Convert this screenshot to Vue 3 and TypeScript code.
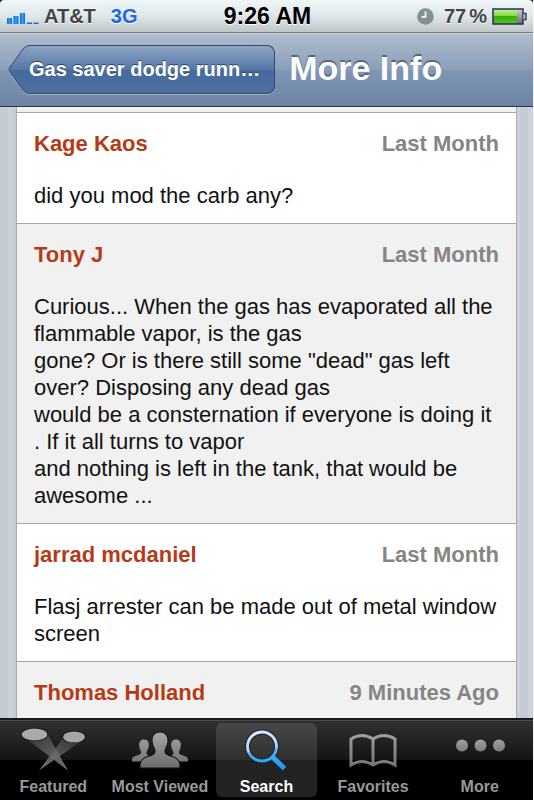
<script setup lang="ts">
import { ref } from 'vue'

interface Comment {
  author: string
  when: string
  text?: string
}

type TabId = 'featured' | 'viewed' | 'search' | 'favorites' | 'more'

const comments: Comment[] = [
  { author: 'Kage Kaos', when: 'Last Month', text: 'did you mod the carb any?' },
  {
    author: 'Tony J',
    when: 'Last Month',
    text: [
      'Curious... When the gas has evaporated all the',
      'flammable vapor, is the gas',
      'gone? Or is there still some "dead" gas left',
      'over? Disposing any dead gas',
      'would be a consternation if everyone is doing it',
      '. If it all turns to vapor',
      'and nothing is left in the tank, that would be',
      'awesome ...',
    ].join('\n'),
  },
  {
    author: 'jarrad mcdaniel',
    when: 'Last Month',
    text: 'Flasj arrester can be made out of metal window\nscreen',
  },
  { author: 'Thomas Holland', when: '9 Minutes Ago' },
]

const tabs: { id: TabId; label: string }[] = [
  { id: 'featured', label: 'Featured' },
  { id: 'viewed', label: 'Most Viewed' },
  { id: 'search', label: 'Search' },
  { id: 'favorites', label: 'Favorites' },
  { id: 'more', label: 'More' },
]

const active = ref<TabId>('search')
</script>

<template>
  <div class="screen">
    <div class="status">
      <div class="status-side">
        <svg class="signal" width="33" height="12" viewBox="0 0 33 12">
          <defs>
            <linearGradient id="bar" x1="0" y1="0" x2="1" y2="0">
              <stop offset="0" stop-color="#1565dc" />
              <stop offset="0.5" stop-color="#27a5fa" />
              <stop offset="1" stop-color="#1565dc" />
            </linearGradient>
          </defs>
          <rect x="0" y="5" width="5" height="6" fill="url(#bar)" />
          <rect x="6.500" y="3" width="5" height="8" fill="url(#bar)" />
          <rect x="13" y="0" width="5" height="11" fill="url(#bar)" />
          <rect x="20" y="9.500" width="5" height="1.500" fill="#2b62cf" />
          <rect x="26.500" y="9.500" width="5" height="1.500" fill="#2b62cf" />
        </svg>
        <span class="carrier">AT&amp;T</span>
        <span class="network">3G</span>
      </div>
      <span class="clock">9:26 AM</span>
      <div class="status-side end">
        <svg class="alarm" width="17" height="17" viewBox="0 0 17 17">
          <circle cx="8.500" cy="8.500" r="8.300" fill="#84908f" />
          <path d="M8.500 3.500V9H4.500" fill="none" stroke="#f2f6f6" stroke-width="1.800" />
        </svg>
        <span class="percent"><span>77</span><span>%</span></span>
        <svg class="battery" width="36" height="17" viewBox="0 0 36 17">
          <defs>
            <linearGradient id="charge" x1="0" y1="0" x2="0" y2="1">
              <stop offset="0" stop-color="#b5ef87" />
              <stop offset="0.450" stop-color="#7fdc42" />
              <stop offset="0.500" stop-color="#39ad0b" />
              <stop offset="1" stop-color="#4fc41b" />
            </linearGradient>
            <linearGradient id="empty" x1="0" y1="0" x2="0" y2="1">
              <stop offset="0" stop-color="#d0d0d2" />
              <stop offset="1" stop-color="#66666c" />
            </linearGradient>
          </defs>
          <rect x="1" y="1" width="30" height="15" fill="url(#empty)" stroke="#333a55" stroke-width="1.600" />
          <rect x="2" y="2" width="23" height="13" fill="url(#charge)" />
          <path d="M31.500 5.500H34V11.500H31.500" fill="#c8ccd2" stroke="#333a55" stroke-width="1.400" />
        </svg>
      </div>
    </div>

    <header class="nav">
      <button class="back" type="button">
        <svg class="back-tip" width="21" height="50" viewBox="0 0 21 50">
          <defs>
            <linearGradient id="tip" gradientUnits="userSpaceOnUse" x1="0" y1="0" x2="0" y2="49">
              <stop offset="0" stop-color="#8ea5c5" />
              <stop offset="0.500" stop-color="#5577a6" />
              <stop offset="0.510" stop-color="#466a9d" />
              <stop offset="1" stop-color="#4a6f9f" />
            </linearGradient>
          </defs>
          <path d="M22 49.500Q18 49.500 15 46L1.500 27Q0 25 1.500 23L15 4Q18 1 22 1" fill="none" stroke="#a3b3c9" />
          <path d="M22 48.500Q18 48.500 15 45L1.500 26Q0 24.500 1.500 23L15 4Q18 .500 22 .500" fill="url(#tip)" stroke="#38486a" />
        </svg>
        <span class="back-label">Gas saver dodge runn…</span>
      </button>
      <h1>More Info</h1>
    </header>

    <main>
      <ul class="comments">
        <li v-for="comment in comments" :key="comment.author" class="comment">
          <div class="meta">
            <a class="author" href="#">{{ comment.author }}</a>
            <span class="when">{{ comment.when }}</span>
          </div>
          <p v-if="comment.text" class="text">{{ comment.text }}</p>
        </li>
      </ul>
    </main>

    <nav class="tabs">
      <button
        v-for="tab in tabs"
        :key="tab.id"
        type="button"
        class="tab"
        :class="{ active: active === tab.id }"
        @click="active = tab.id"
      >
        <svg v-if="tab.id === 'featured'" width="66" height="48" viewBox="0 0 66 48">
          <defs>
            <linearGradient id="beamA" x1="0" y1="0" x2="1" y2="1">
              <stop offset="0" stop-color="#333" />
              <stop offset="1" stop-color="#8a8a8a" />
            </linearGradient>
            <linearGradient id="beamB" x1="1" y1="0" x2="0" y2="1">
              <stop offset="0" stop-color="#2c2c2c" />
              <stop offset="1" stop-color="#777" />
            </linearGradient>
          </defs>
          <path d="M43 13L63 15L19 45.500Z" fill="url(#beamB)" />
          <path d="M4 12L28 10L48 45.500Z" fill="url(#beamA)" opacity="0.850" />
          <ellipse cx="14.500" cy="9.500" rx="13.500" ry="6.700" fill="#111" />
          <ellipse cx="14.500" cy="9.500" rx="12.700" ry="6" fill="#aaa" />
          <ellipse cx="54" cy="12" rx="11.800" ry="6.200" fill="#111" />
          <ellipse cx="54" cy="12" rx="11" ry="5.500" fill="#a5a5a5" />
        </svg>

        <svg v-else-if="tab.id === 'viewed'" width="60" height="48" viewBox="0 0 60 48">
          <defs>
            <linearGradient id="people" gradientUnits="userSpaceOnUse" x1="0" y1="7" x2="0" y2="43">
              <stop offset="0" stop-color="#a6a6a6" />
              <stop offset="1" stop-color="#6c6c6c" />
            </linearGradient>
          </defs>
          <path
            d="M14 14.500C18 14.500 19.500 18 18.500 22C18 25 16.500 26 16.500 28C16.500 31 21 31 21 33C16 34 13 35 12 36.500H2C2 32 3 32 7 30.500C10 29.500 11 29 11 27.500C11 25.500 9.500 24 9.200 21C8.900 17 10.500 14.500 14 14.500Z"
            fill="url(#people)"
          />
          <path
            d="M46 14.500C42 14.500 40.500 18 41.500 22C42 25 43.500 26 43.500 28C43.500 31 39 31 39 33C44 34 47 35 48 36.500H58C58 32 57 32 53 30.500C50 29.500 49 29 49 27.500C49 25.500 50.500 24 50.800 21C51.100 17 49.500 14.500 46 14.500Z"
            fill="url(#people)"
          />
          <path
            d="M30 7.500C35.500 7.500 38 11.500 37.300 17C37 21 34.500 23 34.500 26C34.500 29.500 37 30.500 42 32C47.500 33.500 49.500 36 49.500 42.500H10.500C10.500 36 12.500 33.500 18 32C23 30.500 25.500 29.500 25.500 26C25.500 23 23 21 22.700 17C22 11.500 24.500 7.500 30 7.500Z"
            fill="url(#people)"
            stroke="#111"
            stroke-width="2"
            paint-order="stroke"
          />
        </svg>

        <svg v-else-if="tab.id === 'search'" width="48" height="48" viewBox="0 0 48 48">
          <defs>
            <linearGradient id="glass" gradientUnits="userSpaceOnUse" x1="18" y1="6" x2="24" y2="44">
              <stop offset="0" stop-color="#dfeaff" />
              <stop offset="0.480" stop-color="#a9d0fb" />
              <stop offset="0.530" stop-color="#4cb2f8" />
              <stop offset="1" stop-color="#1d9df5" />
            </linearGradient>
          </defs>
          <circle cx="20" cy="21.500" r="14.500" fill="none" stroke="#17202b" stroke-width="5" />
          <circle cx="20" cy="21.500" r="14.500" fill="none" stroke="url(#glass)" stroke-width="3" />
          <path d="M30.500 32L42.500 43.500" stroke="url(#glass)" stroke-width="5" />
        </svg>

        <svg v-else-if="tab.id === 'favorites'" width="50" height="48" viewBox="0 0 50 48">
          <defs>
            <linearGradient id="book" gradientUnits="userSpaceOnUse" x1="0" y1="8" x2="0" y2="43">
              <stop offset="0" stop-color="#a2a2a2" />
              <stop offset="1" stop-color="#737373" />
            </linearGradient>
          </defs>
          <path
            d="M3 14Q14 7 25 14Q36 7 47 14V40Q36 33 25 40Q14 33 3 40ZM25 14V40"
            fill="none"
            stroke="url(#book)"
            stroke-width="3"
          />
        </svg>

        <svg v-else width="50" height="48" viewBox="0 0 50 48">
          <defs>
            <linearGradient id="dots" x1="0" y1="0" x2="0" y2="1">
              <stop offset="0" stop-color="#a0a0a0" />
              <stop offset="1" stop-color="#7c7c7c" />
            </linearGradient>
          </defs>
          <circle cx="7" cy="20.500" r="6" fill="url(#dots)" />
          <circle cx="25.500" cy="20.500" r="6" fill="url(#dots)" />
          <circle cx="44" cy="20.500" r="6" fill="url(#dots)" />
        </svg>
        <span>{{ tab.label }}</span>
      </button>
    </nav>
  </div>
</template>

<style>
body {
  margin: 0;
  background: #f4f5f6;
}
</style>

<style scoped>
.screen {
  box-sizing: border-box;
  display: flex;
  flex-direction: column;
  height: 100vh;
  margin-right: 1px;
  overflow: hidden;
  font-family: "Liberation Sans", Arial, Helvetica, sans-serif;
  background: #000;
}

button {
  margin: 0;
  border: 0;
  font-family: inherit;
  cursor: pointer;
}

.status {
  display: grid;
  grid-template-columns: 1fr auto 1fr;
  align-items: center;
  height: 32px;
  padding: 0 5px 0 7px;
  border-bottom: 1px solid #73797d;
  border-radius: 4px 4px 0 0;
  background: linear-gradient(#f0f7f9, #dfe7e9 50%, #bec6c7);
  font-size: 20px;
  font-weight: bold;
  color: #444;
  text-shadow: 0 1px 0 #fff;
}

.status-side {
  display: flex;
  align-items: center;
}

.end {
  justify-content: flex-end;
}

.signal {
  margin-top: 6px;
}

.carrier {
  margin: 0 15px 0 4px;
}

.network {
  color: #2068e0;
}

.clock {
  font-size: 23px;
  color: #000;
}

.percent {
  display: flex;
  gap: 3px;
  margin: 0 5px 0 10px;
}

.nav {
  display: flex;
  align-items: center;
  gap: 14px;
  flex-shrink: 0;
  height: 72px;
  padding: 0 8px;
  border-top: 1px solid #cdd6e0;
  border-bottom: 1px solid #2d3642;
  background: linear-gradient(#b0bccc, #8a9db8 50%, #7f95b3 51%, #6d84a6);
}

.back {
  display: flex;
  align-items: stretch;
  height: 50px;
  padding: 0;
  background: none;
}

.back-tip {
  flex-shrink: 0;
}

.back-label {
  display: flex;
  align-items: center;
  box-sizing: border-box;
  height: 49px;
  padding: 0 14px 0 0;
  border: 1px solid #38486a;
  border-left: 0;
  border-radius: 0 8px 8px 0;
  background: linear-gradient(#8ea5c5, #5577a6 50%, #466a9d 51%, #4a6f9f);
  box-shadow: 0 1px 0 #a3b3c9;
  font-size: 20px;
  font-weight: bold;
  white-space: nowrap;
  color: #fff;
  text-shadow: 0 -1px 0 #2c4264;
}

h1 {
  margin: 0;
  padding-bottom: 4px;
  font-size: 34px;
  line-height: 40px;
  white-space: nowrap;
  color: #fff;
  text-shadow: 0 -2px 0 #566780;
}

main {
  flex: 1;
  min-height: 0;
  padding: 0 16px;
  overflow-y: auto;
  scrollbar-width: none;
  background: repeating-linear-gradient(90deg, #c4cbd3 0 8px, #cbd2d9 8px 13px);
}

.comments {
  margin: 0;
  padding: 0;
  list-style: none;
  border: solid #a9abad;
  border-width: 0 1px;
  background: #fff;
}

/* Tail of the list above the first visible comment */
.comments::before {
  content: "";
  display: block;
  height: 5px;
  border-bottom: 1px solid #a5a5a5;
  background: #f1f1f1;
}

.comment {
  padding: 17px 10px 14px 17px;
  border-bottom: 1px solid #a5a5a5;
  font-size: 22px;
  line-height: 27px;
}

.comment:nth-child(even) {
  background: #f1f1f1;
}

.meta {
  display: flex;
  justify-content: space-between;
  padding-right: 7px;
  font-weight: bold;
}

.author {
  color: #b63a17;
  text-decoration: none;
}

.when {
  color: #858585;
}

.text {
  margin: 25px 0 0;
  white-space: pre-line;
  color: #111;
}

.tabs {
  display: flex;
  flex-shrink: 0;
  border-top: 2px solid #16181b;
  background: linear-gradient(#4a4a4a 0 1px, #303030 1px, #141414 40px, #000 40px);
}

.tab {
  display: flex;
  flex: 1 1 0;
  flex-direction: column;
  align-items: center;
  gap: 4px;
  min-width: 0;
  margin: 3px;
  padding: 2px 0 0;
  border-radius: 6px;
  background: none;
  font-size: 16px;
  font-weight: bold;
  line-height: 20px;
  white-space: nowrap;
  color: #999;
}

.active {
  background: linear-gradient(#474747, #2f2f2f 37px, #222 37px);
  color: #fff;
}
</style>
